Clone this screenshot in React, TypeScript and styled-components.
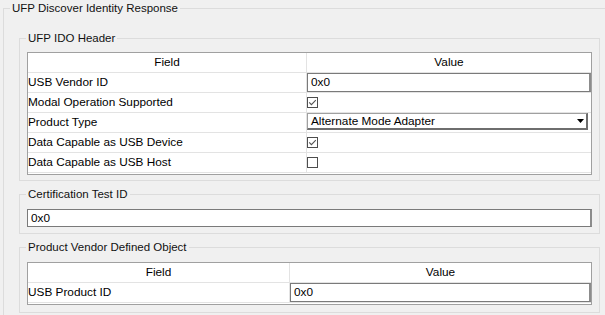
import React from "react";
import styled, { createGlobalStyle } from "styled-components";

const GlobalStyle = createGlobalStyle`
  * {
    box-sizing: border-box;
  }
  body {
    margin: 0;
    background: #f0f0f0;
    font-family: "Liberation Sans", Arial, sans-serif;
    font-size: 11.8px;
    color: #000;
  }
`;

interface FieldRow {
  field: string;
  kind: "text" | "check" | "combo";
  value?: string;
  checked?: boolean;
}

const idoRows: FieldRow[] = [
  { field: "USB Vendor ID", kind: "text", value: "0x0" },
  { field: "Modal Operation Supported", kind: "check", checked: true },
  { field: "Product Type", kind: "combo", value: "Alternate Mode Adapter" },
  { field: "Data Capable as USB Device", kind: "check", checked: true },
  { field: "Data Capable as USB Host", kind: "check", checked: false },
];

const pvdoRows: FieldRow[] = [
  { field: "USB Product ID", kind: "text", value: "0x0" },
];

const CheckBox = ({ checked }: { checked?: boolean }) => (
  <CheckSvg width="11" height="11" viewBox="0 0 11 11">
    <rect x="0.5" y="0.5" width="10" height="10" fill="#fff" stroke="#4d4d4d" />
    {checked && (
      <path d="M2.2 5.4 L4.4 7.7 L8.8 3.2" fill="none" stroke="#555" strokeWidth="1.1" />
    )}
  </CheckSvg>
);

const renderValue = (row: FieldRow) => {
  if (row.kind === "check") return <CheckBox checked={row.checked} />;
  if (row.kind === "combo")
    return (
      <Combo>
        <span>{row.value}</span>
        <svg width="7" height="4" viewBox="0 0 7 4">
          <path d="M0 0 H7 L3.5 4 Z" fill="#000" />
        </svg>
      </Combo>
    );
  return <CellInput>{row.value}</CellInput>;
};

const DataTable = ({ rows, fieldWidth }: { rows: FieldRow[]; fieldWidth: number }) => (
  <Table $fieldWidth={fieldWidth}>
    <HeaderCell $divider>Field</HeaderCell>
    <HeaderCell>Value</HeaderCell>
    {rows.map((row) => (
      <React.Fragment key={row.field}>
        <FieldCell>{row.field}</FieldCell>
        <ValueCell>{renderValue(row)}</ValueCell>
      </React.Fragment>
    ))}
  </Table>
);

const App = () => {
  return (
    <>
      <GlobalStyle />
      <Screen>
        <OuterGroup>
          <Legend>UFP Discover Identity Response</Legend>
          <OuterBody>
            <Group>
              <Legend>UFP IDO Header</Legend>
              <GroupBody $top={6} $bottom={5}>
                <DataTable rows={idoRows} fieldWidth={279} />
              </GroupBody>
            </Group>
            <Group>
              <Legend>Certification Test ID</Legend>
              <GroupBody $top={7} $bottom={6}>
                <TextBox>0x0</TextBox>
              </GroupBody>
            </Group>
            <Group>
              <Legend>Product Vendor Defined Object</Legend>
              <GroupBody $top={7} $bottom={7}>
                <DataTable rows={pvdoRows} fieldWidth={262} />
              </GroupBody>
            </Group>
          </OuterBody>
        </OuterGroup>
      </Screen>
    </>
  );
};

export default App;

const Screen = styled.div`
  width: 605px;
  height: 315px;
  overflow: hidden;
  padding: 1px 0 0 3px;
`;

const OuterGroup = styled.fieldset`
  margin: 0;
  padding: 0;
  width: 640px;
  min-width: 0;
  border: 1px solid #dcdcdc;
`;

const Group = styled.fieldset`
  margin: 0;
  padding: 0;
  width: 581px;
  min-width: 0;
  border: 1px solid #dcdcdc;
`;

const Legend = styled.legend`
  margin-left: 6px;
  padding: 0 2px;
  font-size: 11.5px;
  line-height: 15px;
  color: #111;
`;

const OuterBody = styled.div`
  display: flex;
  flex-direction: column;
  gap: 6px;
  padding: 15px 0 12px 15px;
`;

const GroupBody = styled.div<{ $top: number; $bottom: number }>`
  padding: ${(p) => p.$top}px 7px ${(p) => p.$bottom}px 7px;
`;

const Table = styled.div<{ $fieldWidth: number }>`
  display: grid;
  grid-template-columns: ${(p) => p.$fieldWidth}px 1fr;
  background: #fff;
  border: 1px solid #a0a0a0;
  padding-bottom: 1px;
`;

const HeaderCell = styled.div<{ $divider?: boolean }>`
  height: 20px;
  line-height: 19px;
  text-align: center;
  border-bottom: 1px solid #e3e3e3;
  border-right: ${(p) => (p.$divider ? "1px solid #e3e3e3" : "none")};
`;

const FieldCell = styled.div`
  height: 20px;
  line-height: 19px;
  white-space: nowrap;
  border-bottom: 1px solid #e3e3e3;
  border-right: 1px solid #e3e3e3;
`;

const ValueCell = styled.div`
  height: 20px;
  display: flex;
  align-items: flex-start;
  border-bottom: 1px solid #e3e3e3;
`;

const CheckSvg = styled.svg`
  display: block;
  margin: 4px 0 0 0;
`;

const CellInput = styled.div`
  width: 100%;
  height: 19px;
  line-height: 17px;
  padding-left: 3px;
  background: #fff;
  border: 1px solid #7a7a7a;
  border-right: 2px solid #8c8c8c;
`;

const Combo = styled.div`
  width: calc(100% - 3px);
  height: 17px;
  display: flex;
  align-items: center;
  justify-content: space-between;
  padding: 0 2px 0 3px;
  background: #fff;
  border-top: 1px solid #a0a0a0;
  border-left: 1px solid #a0a0a0;
  border-right: 2px solid #6e6e6e;
  border-bottom: 2px solid #6e6e6e;
  span {
    line-height: 14px;
  }
`;

const TextBox = styled.div`
  height: 18px;
  line-height: 16px;
  padding-left: 3px;
  background: #fff;
  border: 1px solid #7a7a7a;
  border-right: 2px solid #8c8c8c;
`;
